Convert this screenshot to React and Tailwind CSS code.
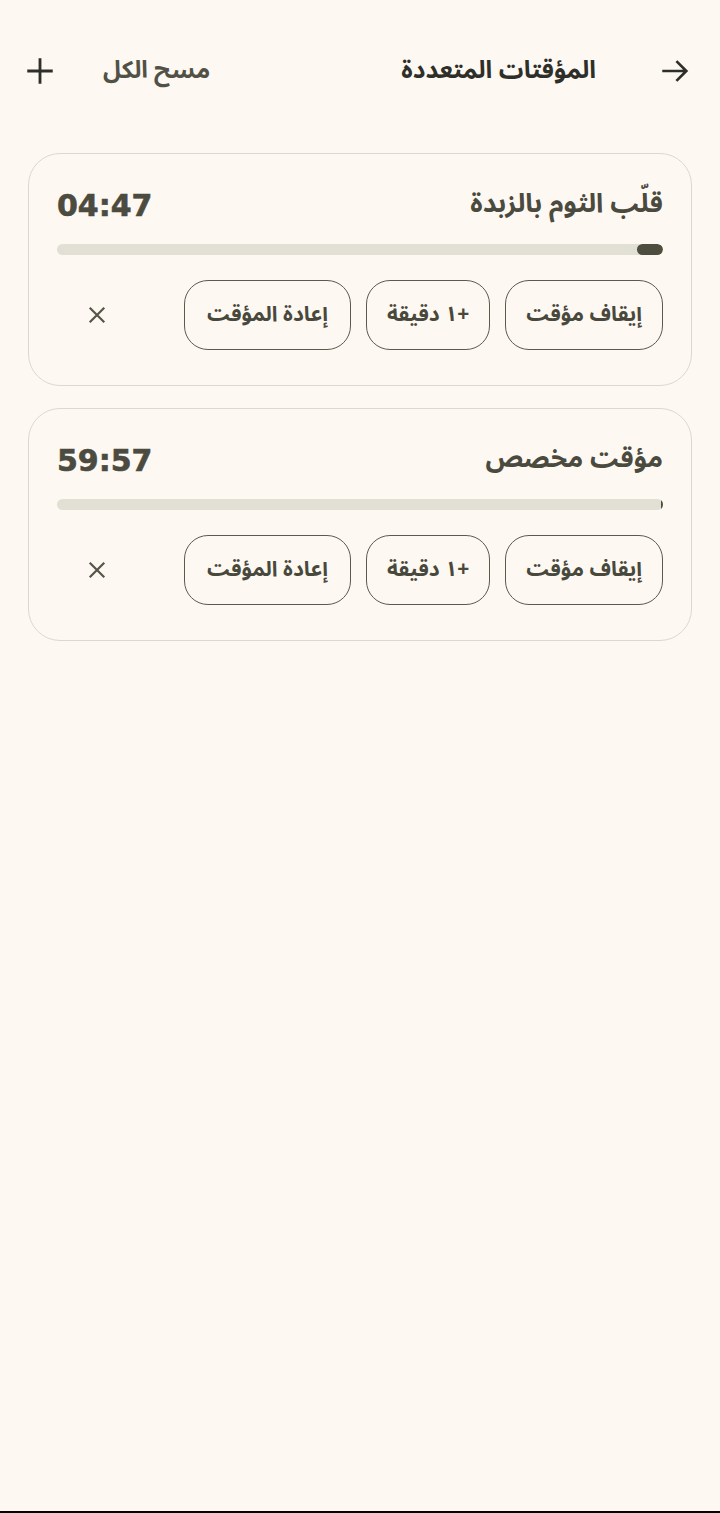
import React from "react";

const arabic = { fontFamily: '"Noto Sans Arabic", "Noto Sans", "DejaVu Sans", sans-serif' };

function TimerCard({ title, time, progress }) {
  return (
    <div className="mx-7 rounded-[32px] border-[1.5px] border-[#ddd8cf] px-7 pt-[31px] pb-[35px]">
      <div className="flex h-[40px] items-center justify-between">
        <div className="text-[26.5px] font-bold text-[#4a4a3e]" style={arabic}>{title}</div>
        <div
          dir="ltr"
          className="text-[30px] font-bold tracking-[0px] text-[#4b4b3f]"
          style={{ fontFamily: '"DejaVu Sans", sans-serif', WebkitTextStroke: "0.6px #4b4b3f" }}
        >
          {time}
        </div>
      </div>
      <div className="mt-[19px] flex h-[11px] w-full justify-start overflow-hidden rounded-full bg-[#e2e0d5]">
        <div className="h-full rounded-full bg-[#4e4e40]" style={{ width: `${progress}%` }} />
      </div>
      <div className="mt-[25px] flex items-center gap-[15px]">
        {["إيقاف مؤقت", "+١ دقيقة", "إعادة المؤقت"].map((t, i) => (
          <button
            key={t}
            className={
              i === 2
                ? "flex h-[70px] items-center justify-center rounded-[24px] border-[1.5px] border-[#5b5b4d] px-[22px] text-[21px] font-bold text-[#48483c]"
                : "flex h-[70px] items-center justify-center rounded-[24px] border-[1.5px] border-[#5b5b4d] px-[20px] text-[21px] font-bold text-[#48483c]"
            }
            style={arabic}
          >
            {t}
          </button>
        ))}
        <div className="mr-[48px] flex h-[48px] w-[48px] items-center justify-center">
          <svg width="26" height="26" viewBox="0 0 24 24" fill="none" stroke="#55554a" strokeWidth="2" strokeLinecap="square">
            <path d="M6 6 L18 18 M18 6 L6 18" />
          </svg>
        </div>
      </div>
    </div>
  );
}

export default function App() {
  return (
    <div dir="rtl" className="flex min-h-[1513px] flex-col bg-[#fdf8f2]">
      <div className="flex-1">
        <div className="flex h-[142px] items-center px-[28px] pb-[1px]">
          <div className="flex items-center">
            <svg width="34" height="34" viewBox="0 0 24 24" fill="none" stroke="#2e2e2a" strokeWidth="1.9" strokeLinecap="butt" strokeLinejoin="miter">
              <path d="M3 12 H20 M13 5 L20 12 L13 19" />
            </svg>
            <div className="mr-[62px] text-[24.5px] font-bold text-[#2f2f2a]" style={arabic}>
              المؤقتات المتعددة
            </div>
          </div>
          <div className="mr-auto flex items-center">
            <div className="text-[24px] font-bold text-[#525145]" style={arabic}>مسح الكل</div>
            <svg className="mr-[46px] -ml-[5px]" width="34" height="34" viewBox="0 0 24 24" fill="none" stroke="#2e2e2a" strokeWidth="2">
              <path d="M12 3 V21 M3 12 H21" />
            </svg>
          </div>
        </div>
        <div className="mt-[11px] flex flex-col gap-[22px]">
          <TimerCard title="قلّب الثوم بالزبدة" time="04:47" progress={4.3} />
          <TimerCard title="مؤقت مخصص" time="59:57" progress={0.3} />
        </div>
      </div>
      <div className="h-[2px] bg-black" />
    </div>
  );
}
